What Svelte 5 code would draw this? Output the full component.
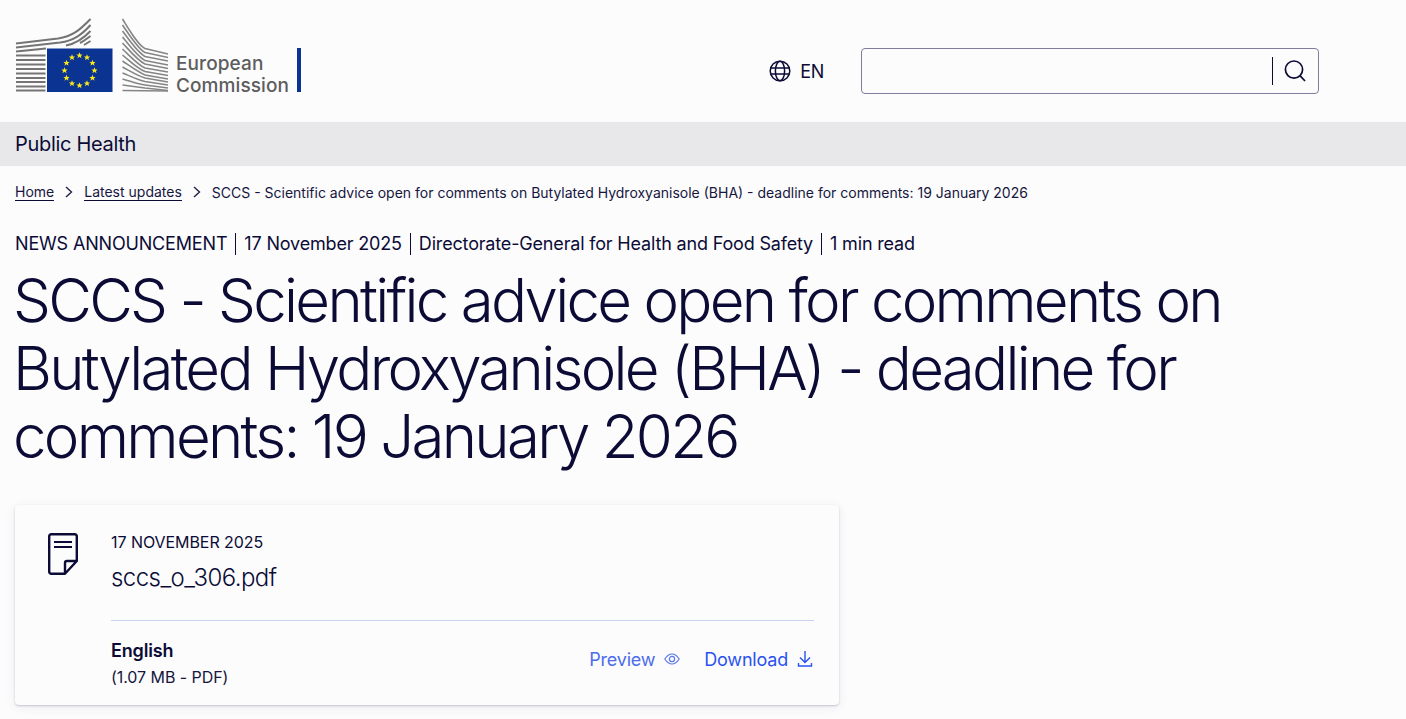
<script>
const crumbs = ["Home", "Latest updates"];
const meta = ["NEWS ANNOUNCEMENT", "17 November 2025", "Directorate-General for Health and Food Safety", "1 min read"];

// stars of the flag, 12 around a circle
const stars = Array.from({ length: 12 }, (_, i) => {
	const a = (i * Math.PI) / 6;
	return { x: 79.5 + 15 * Math.sin(a), y: 70.5 - 15 * Math.cos(a) };
});
const starPath = "M0 -3.2L.9 -1L3.1 -1L1.4 .4L2 2.7L0 1.3L-2 2.7L-1.4 .4L-3.1 -1L-.9 -1Z";

// left wing stripes, top ones bend up to the right
const leftCurves = [
	"M16 43.5L58 38.5C72 36.5 80 30 90.5 19",
	"M16 47.5L60 42.5C74 40.5 82 34.5 90.5 25",
	"M16 51.5L46 48.5M66 45.5C76 43.5 84 38 90.5 31",
	"M80 43C84 41 87 38.5 90.5 36",
	"M84 45L90.5 41"
];
const leftFlat = [55.5, 60, 64.5, 69, 73.5, 78, 82, 86.5, 90.5];
const rightStripes = [
	"M122.5 19C130 31 138 45 145 48.5L168 54",
	"M122.5 25C130 36 138 49 145 52.5L168 57.5",
	"M122.5 31C130 41 138 53 145 56.5L168 61",
	"M122.5 37C130 46 138 57 145 60.5L168 65",
	"M122.5 43C130 51 138 61 145 64L168 68.5",
	"M122.5 49C130 56 138 65 145 68L168 72",
	"M122.5 55C130 61 138 69 145 71.5L168 75.5",
	"M122.5 61C130 66 138 72 145 75L168 79",
	"M122.5 67C130 71 138 76 145 78L168 82",
	"M122.5 73C130 76 138 80 145 81.5L168 85",
	"M122.5 79C130 81 138 84 145 85L168 88",
	"M122.5 85L145 88L168 90.5",
	"M122.5 90.5L168 91"
];
</script>

<div class="page">
	<header class="site-header">
		<div class="logo">
			<svg class="logo-mark" width="170" height="100" viewBox="0 0 170 100">
				<g fill="none" stroke="#747474" stroke-width="2">
					{#each leftCurves as d}
						<path {d} />
					{/each}
					{#each leftFlat as y}
						<path d="M16 {y}H45.5" />
					{/each}
				</g>
				<g fill="none" stroke="#858585" stroke-width="1.6">
					{#each rightStripes as d}
						<path {d} />
					{/each}
				</g>
				<rect x="47" y="48.5" width="65.5" height="43.5" fill="#0b3391" />
				<g fill="#f8e71c">
					{#each stars as s}
						<path d={starPath} transform="translate({s.x} {s.y})" />
					{/each}
				</g>
			</svg>
			<div class="logo-text">European<br />Commission</div>
			<div class="logo-bar"></div>
		</div>
		<div class="tools">
			<div class="lang">
				<svg width="22" height="22" viewBox="0 0 22 22" fill="none" stroke="#0b0b36" stroke-width="1.5">
					<circle cx="11" cy="11" r="9.8" />
					<ellipse cx="11" cy="11" rx="4.6" ry="9.8" />
					<path d="M1.5 8H20.5M1.5 14H20.5" />
				</svg>
				<span>EN</span>
			</div>
			<div class="search">
				<div class="search-sep"></div>
				<svg width="24" height="24" viewBox="0 0 24 24" fill="none" stroke="#0b0b36" stroke-width="1.7">
					<circle cx="11" cy="10.6" r="8.6" />
					<path d="M17.2 16.8L22 22" />
				</svg>
			</div>
		</div>
	</header>

	<div class="site-name">Public Health</div>

	<nav class="crumbs">
		{#each crumbs as c}
			<a href="#top">{c}</a>
			<svg class="chev" width="8" height="12" viewBox="0 0 8 12" fill="none" stroke="#262146" stroke-width="1.4">
				<path d="M1 1L6.5 6L1 11" />
			</svg>
		{/each}
		<span>SCCS - Scientific advice open for comments on Butylated Hydroxyanisole (BHA) - deadline for comments: 19 January 2026</span>
	</nav>

	<div class="meta">
		{#each meta as m}
			<span>{m}</span>
		{/each}
	</div>

	<h1>SCCS - Scientific advice open for comments on Butylated Hydroxyanisole (BHA) - deadline for comments: 19 January 2026</h1>

	<section class="card">
		<div class="card-top">
			<svg class="doc" width="32" height="44" viewBox="0 0 32 44" fill="none" stroke="#0b0b36" stroke-width="2.4">
				<path d="M18 41.8H4.2A2 2 0 0 1 2.2 39.8V4.2A2 2 0 0 1 4.2 2.2H27.8A2 2 0 0 1 29.8 4.2V29L18 41.8V31A2 2 0 0 1 20 29H29.8" stroke-linejoin="round" />
				<path d="M7 10H25M7 15H25" stroke-width="1.8" />
			</svg>
			<div>
				<div class="date">17 NOVEMBER 2025</div>
				<div class="filename">sccs_o_306.pdf</div>
			</div>
		</div>
		<div class="card-bottom">
			<div>
				<div class="lang-name">English</div>
				<div class="size">(1.07 MB - PDF)</div>
			</div>
			<div class="actions">
				<a href="#top" class="action preview">
					Preview
					<svg width="16" height="12" viewBox="0 0 16 12" fill="none" stroke="#5a78ec" stroke-width="1.2">
						<path d="M.8 6C3 2.6 5.4 1 8 1S13 2.6 15.2 6C13 9.4 10.6 11 8 11S3 9.4 .8 6Z" />
						<circle cx="8" cy="6" r="2.6" />
					</svg>
				</a>
				<a href="#top" class="action">
					Download
					<svg width="16" height="18" viewBox="0 0 16 18" fill="none" stroke="#2a52f0" stroke-width="1.4">
						<path d="M8 1V12M3 7.5L8 12.5L13 7.5M1.5 13V16H14.5V13" />
					</svg>
				</a>
			</div>
		</div>
	</section>
</div>

<style>
:global(body) {
	background: #fcfcfd;
	color: #0b0b36;
	font-family: Inter, "Liberation Sans", sans-serif;
}

.page {
	height: 719px;
	overflow: hidden;
}

.site-header {
	height: 122px;
	display: flex;
	justify-content: space-between;
	align-items: flex-start;
	padding-right: 87px;
}

.logo {
	display: flex;
	align-items: flex-end;
	height: 92px;
}

.logo-mark {
	flex: none;
	margin-bottom: -8px;
}

.logo-text {
	color: #5d5d5d;
	font-size: 19px;
	line-height: 22px;
	font-weight: 500;
	letter-spacing: 0.1px;
	margin-left: 6px;
	margin-bottom: -5px;
	width: 121px;
	white-space: nowrap;
}

.logo-bar {
	width: 4px;
	height: 44px;
	background: #0b3391;
}

.tools {
	display: flex;
	align-items: center;
	margin-top: 48px;
}

.lang {
	display: flex;
	align-items: center;
	gap: 9px;
	font-size: 18px;
	letter-spacing: -0.3px;
	margin-right: 37px;
}

.lang svg {
	display: block;
}

.search {
	width: 458px;
	height: 46px;
	box-sizing: border-box;
	border: 1px solid #7f7e9d;
	border-radius: 4px;
	display: flex;
	align-items: center;
	justify-content: flex-end;
	padding-right: 11px;
	gap: 10px;
}

.search-sep {
	width: 1.5px;
	height: 28px;
	background: #0b0b36;
}

.site-name {
	height: 44px;
	background: #e8e8ea;
	display: flex;
	align-items: center;
	padding-left: 15px;
	font-size: 20px;
	letter-spacing: -0.3px;
}

.crumbs {
	display: flex;
	align-items: center;
	gap: 11px;
	padding: 17px 15px 0;
	height: 18px;
	font-size: 14px;
	line-height: 17px;
	white-space: nowrap;
	color: #16163e;
}

.crumbs a {
	color: #16163e;
	text-decoration: none;
	border-bottom: 1px solid #0b0b36;
}

.chev {
	flex: none;
}

.meta {
	display: flex;
	margin-top: 32px;
	padding-left: 15px;
	font-size: 18px;
	line-height: 22px;
	letter-spacing: -0.17px;
}

.meta span {
	padding-right: 8px;
	margin-right: 8px;
	border-right: 1px solid #0b0b36;
}

.meta span:last-child {
	border: 0;
}

h1 {
	margin: 11px 0 0 -2px;
	padding: 0 15px;
	width: 1270px;
	box-sizing: border-box;
	font-size: 60px;
	line-height: 68px;
	font-weight: 300;
	letter-spacing: -2.72px;
	color: #0b0b36;
}

.card {
	width: 824px;
	height: 200px;
	box-sizing: border-box;
	margin: 35px 0 0 15px;
	padding: 27px 25px 0 32px;
	background: #fcfcfd;
	border-radius: 4px;
	box-shadow: 0 1px 2px rgba(11, 11, 54, 0.2), 0 2px 12px rgba(11, 11, 54, 0.07);
}

.card-top {
	display: flex;
	gap: 32px;
	height: 88px;
}

.doc {
	flex: none;
}

.date {
	font-size: 16px;
	line-height: 20px;
	letter-spacing: -0.06px;
}

.filename {
	font-size: 24px;
	font-weight: 300;
	line-height: 30px;
	margin-top: 11px;
	letter-spacing: -0.55px;
}

.card-bottom {
	margin-left: 64px;
	padding-top: 19px;
	border-top: 1px solid #c5d5f0;
	display: flex;
	justify-content: space-between;
	align-items: center;
}

.lang-name {
	font-size: 18px;
	font-weight: 600;
	line-height: 22px;
	letter-spacing: -0.15px;
}

.size {
	font-size: 16px;
	line-height: 20px;
	margin-top: 5px;
	letter-spacing: -0.06px;
	color: #16163e;
}

.actions {
	display: flex;
	gap: 24px;
	margin-bottom: 9px;
	margin-right: 1px;
}

.action {
	display: flex;
	align-items: center;
	gap: 9px;
	font-size: 18px;
	letter-spacing: -0.2px;
	color: #2a52f0;
	text-decoration: none;
}

.preview {
	color: #4c6cec;
}
</style>
